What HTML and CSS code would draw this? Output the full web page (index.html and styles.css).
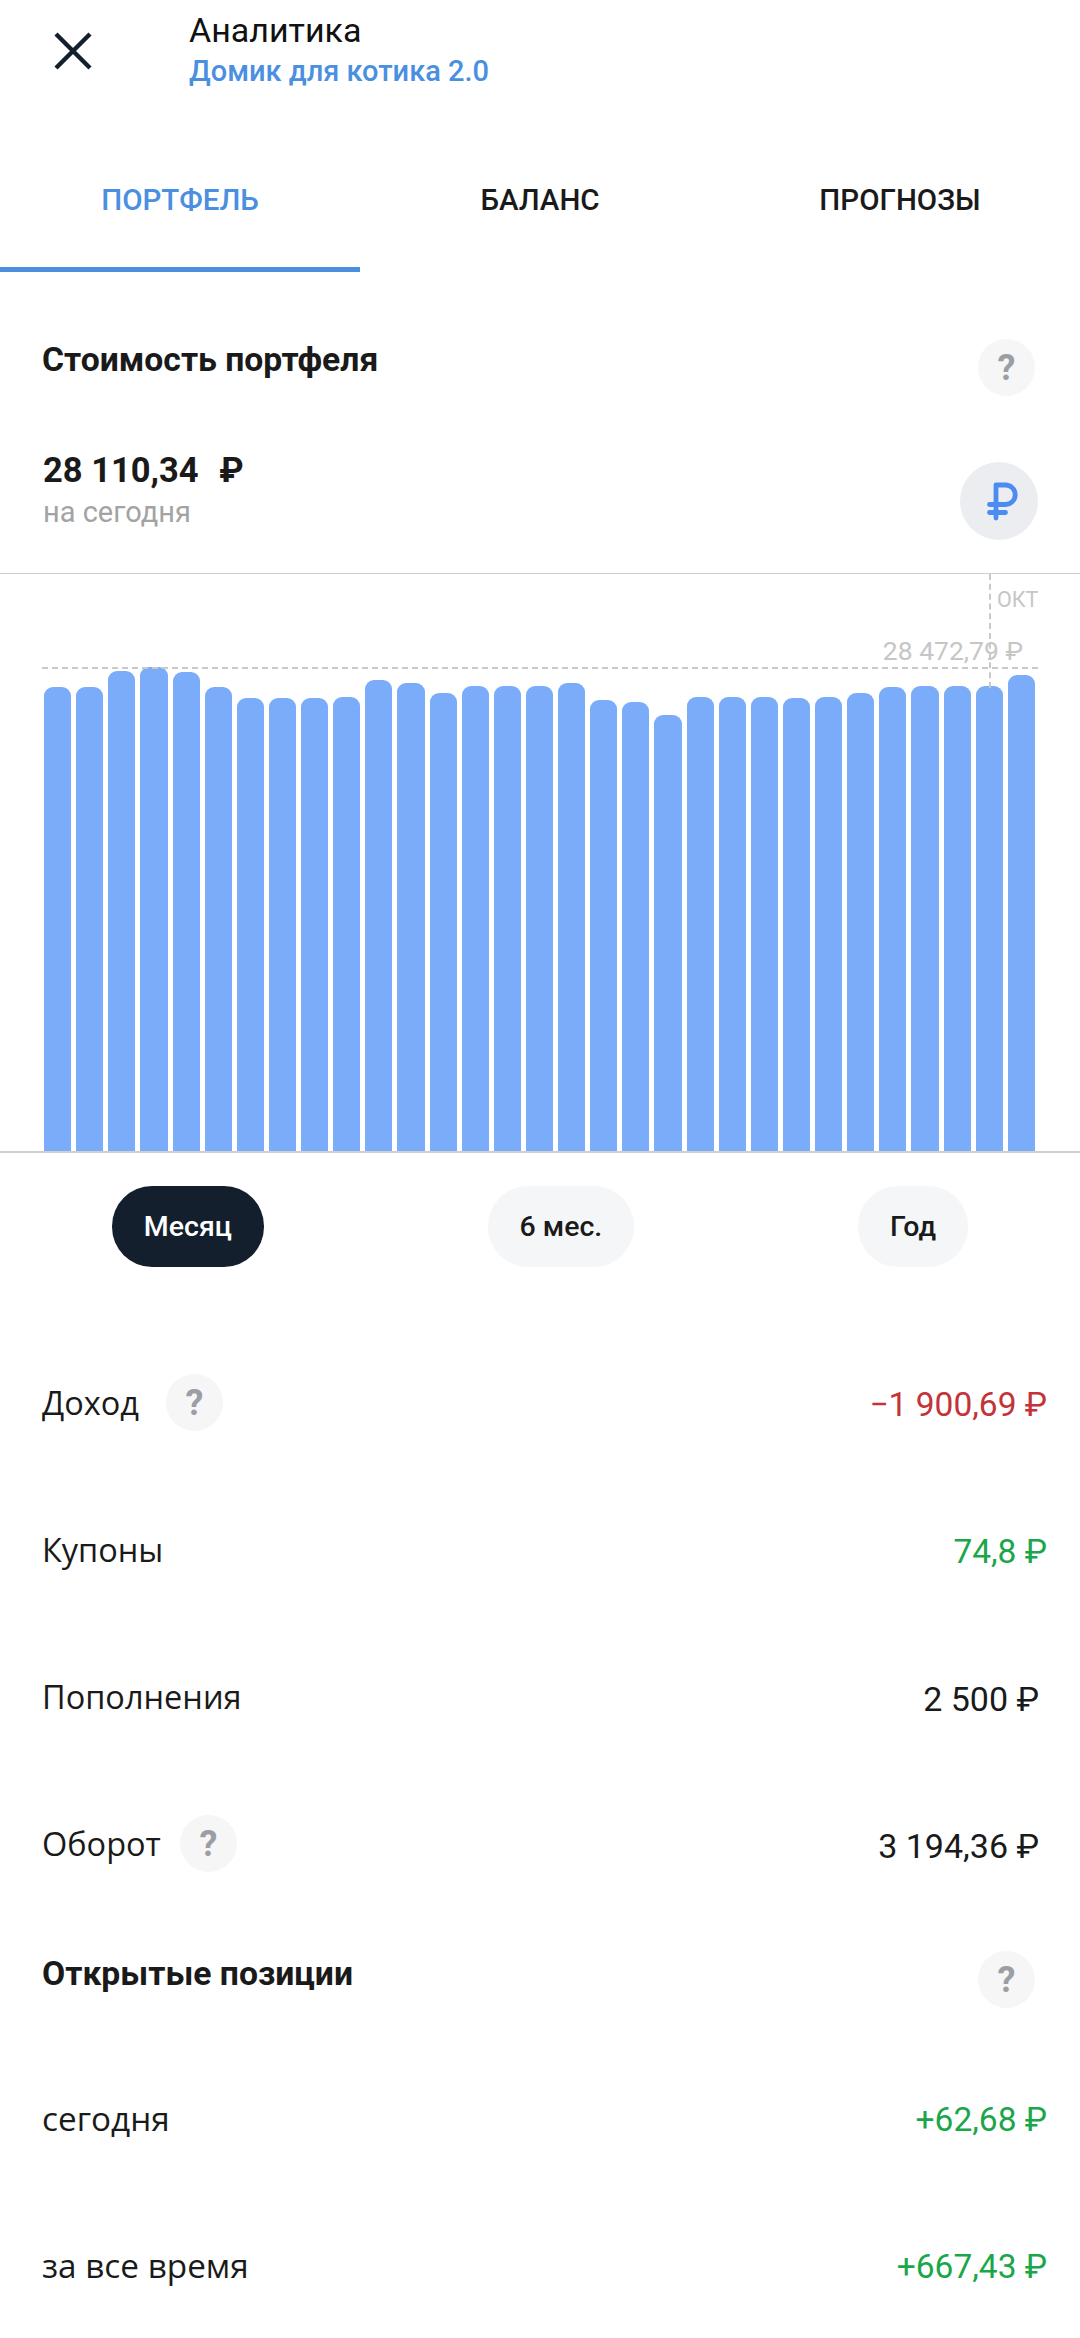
FILE: index.html
```html
<!DOCTYPE html>
<html lang="ru">
<head>
    <meta charset="UTF-8">
    <meta name="viewport" content="width=device-width, initial-scale=1.0">
    <title>Аналитика</title>
    <link rel="stylesheet" href="styles.css">
</head>
<body>

<header class="topbar">
    <svg class="close-icon" width="38" height="38" viewBox="0 0 38 38">
        <path d="M2 2 L36 36 M36 2 L2 36" fill="none" stroke="#141f2e" stroke-width="4.4"/>
    </svg>
    <div class="topbar-text">
        <div class="topbar-title">Аналитика</div>
        <div class="topbar-sub">Домик для котика 2.0</div>
    </div>
</header>

<nav class="tabs">
    <div class="tab active">ПОРТФЕЛЬ</div>
    <div class="tab">БАЛАНС</div>
    <div class="tab">ПРОГНОЗЫ</div>
</nav>

<section class="section-head head-portfolio">
    <h2>Стоимость портфеля</h2>
    <span class="help">?</span>
</section>

<section class="total">
    <div>
        <div class="total-value">28 110,34 <span class="total-sign">₽</span></div>
        <div class="total-note">на сегодня</div>
    </div>
    <span class="currency">
        <svg width="78" height="78" viewBox="0 0 78 78">
            <path d="M36 56 V23 H45.500 a9.750 9.750 0 0 1 0 19.500 H29.500 M29.500 50.500 H45.500" fill="none" stroke="#4a8cf0" stroke-width="4.800" stroke-linecap="round" stroke-linejoin="round"/>
        </svg>
    </span>
</section>

<section class="chart">
    <span class="month">ОКТ</span>
    <span class="peak">28 472,79 ₽</span>
    <span class="guide-h"></span>
    <span class="guide-v"></span>
    <div class="bars">
        <div class="bar" style="height:464px"></div>
        <div class="bar" style="height:464px"></div>
        <div class="bar" style="height:480px"></div>
        <div class="bar" style="height:484px"></div>
        <div class="bar" style="height:479px"></div>
        <div class="bar" style="height:464px"></div>
        <div class="bar" style="height:453px"></div>
        <div class="bar" style="height:453px"></div>
        <div class="bar" style="height:453px"></div>
        <div class="bar" style="height:454px"></div>
        <div class="bar" style="height:471px"></div>
        <div class="bar" style="height:468px"></div>
        <div class="bar" style="height:458px"></div>
        <div class="bar" style="height:465px"></div>
        <div class="bar" style="height:465px"></div>
        <div class="bar" style="height:465px"></div>
        <div class="bar" style="height:468px"></div>
        <div class="bar" style="height:451px"></div>
        <div class="bar" style="height:449px"></div>
        <div class="bar" style="height:436px"></div>
        <div class="bar" style="height:454px"></div>
        <div class="bar" style="height:454px"></div>
        <div class="bar" style="height:454px"></div>
        <div class="bar" style="height:453px"></div>
        <div class="bar" style="height:454px"></div>
        <div class="bar" style="height:458px"></div>
        <div class="bar" style="height:464px"></div>
        <div class="bar" style="height:465px"></div>
        <div class="bar" style="height:465px"></div>
        <div class="bar" style="height:465px"></div>
        <div class="bar" style="height:476px"></div>
    </div>
</section>

<div class="periods">
    <div class="pill selected">Месяц</div>
    <div class="pill">6 мес.</div>
    <div class="pill">Год</div>
</div>

<section class="stats">
    <div class="row">
        <div class="row-label">Доход <span class="help">?</span></div>
        <div class="row-value red">−1 900,69 ₽</div>
    </div>
    <div class="row">
        <div class="row-label">Купоны</div>
        <div class="row-value green">74,8 ₽</div>
    </div>
    <div class="row">
        <div class="row-label">Пополнения</div>
        <div class="row-value plain">2 500 ₽</div>
    </div>
    <div class="row">
        <div class="row-label">Оборот <span class="help near">?</span></div>
        <div class="row-value plain">3 194,36 ₽</div>
    </div>
</section>

<section class="section-head head-open">
    <h2>Открытые позиции</h2>
    <span class="help">?</span>
</section>

<section class="stats stats-open">
    <div class="row">
        <div class="row-label">сегодня</div>
        <div class="row-value green">+62,68 ₽</div>
    </div>
    <div class="row">
        <div class="row-label">за все время</div>
        <div class="row-value green">+667,43 ₽</div>
    </div>
</section>

</body>
</html>
```

FILE: styles.css
```css
* {
    box-sizing: border-box;
}
html, body {
    margin: 0;
    height: 2338px;
    overflow: hidden;
}
body {
    background: #fff;
    color: #1a1a1a;
    font-family: Roboto, "Noto Sans", sans-serif;
}

/* header */
.topbar {
    display: flex;
    height: 100px;
    padding-left: 54px;
}
.close-icon {
    margin-top: 32px;
}
.topbar-text {
    margin-left: 97px;
    padding-top: 9px;
}
.topbar-title {
    font-size: 34px;
    line-height: 42px;
    color: #111;
}
.topbar-sub {
    font-size: 29px;
    font-weight: 500;
    line-height: 41px;
    color: #4a8fe0;
}

/* tabs */
.tabs {
    display: flex;
    height: 172px;
}
.tab {
    flex: 1;
    text-align: center;
    padding-top: 82px;
    font-size: 29.500px;
    line-height: 36px;
    font-weight: 500;
    color: #1a1a1a;
}
.tab.active {
    color: #4a8fe0;
    border-bottom: 5px solid #4a8fe0;
}

/* section titles */
.section-head {
    display: flex;
    justify-content: space-between;
    padding: 0 45px 0 42px;
}
.section-head h2 {
    margin: 0;
    font-size: 33.700px;
    line-height: 40px;
    font-weight: 700;
}
.head-portfolio {
    padding-top: 67px;
    height: 152px;
}
.head-portfolio h2 {
    margin-top: 1px;
}
.head-open {
    height: 127px;
    padding-top: 34px;
}
.head-open h2 {
    margin-top: 3px;
}
.help {
    display: inline-flex;
    align-items: center;
    justify-content: center;
    width: 57px;
    height: 57px;
    border-radius: 50%;
    background: #f6f6f7;
    color: #9c9ea6;
    font-family: Roboto, sans-serif;
    font-size: 36px;
    font-weight: 700;
}

/* total */
.total {
    display: flex;
    justify-content: space-between;
    height: 149px;
    padding: 0 42px 0 43px;
}
.total-value {
    font-size: 34.500px;
    font-weight: 700;
    line-height: 46px;
    margin-top: 23px;
}
.total-sign {
    margin-left: 12px;
}
.total-note {
    font-size: 29px;
    line-height: 38px;
    color: #a3a3a3;
}
.currency {
    width: 78px;
    height: 78px;
    margin-top: 38px;
    border-radius: 50%;
    background: #ebedf0;
}
.currency svg {
    display: block;
}

/* chart */
.chart {
    position: relative;
    height: 580px;
    border-top: 1px solid #cfcfcf;
    border-bottom: 2px solid #cfcfcf;
    overflow: hidden;
}
.bars {
    display: flex;
    align-items: flex-end;
    gap: 5px;
    height: 100%;
    padding: 0 45px 0 44px;
}
.bar {
    flex: 1;
    background: #7aacf9;
    border-radius: 9px 9px 0 0;
}
.month {
    position: absolute;
    left: 997px;
    top: 13px;
    font-size: 21.500px;
    line-height: 26px;
    color: #c6c6c6;
}
.peak {
    position: absolute;
    right: 57px;
    top: 61px;
    font-size: 26.500px;
    line-height: 32px;
    color: #c6c6c6;
}
.guide-h {
    position: absolute;
    left: 42px;
    width: 996px;
    top: 93px;
    border-top: 2px dashed #c9c9c9;
}
.guide-v {
    position: absolute;
    left: 989px;
    top: 0;
    height: 114px;
    border-left: 2px dashed #c9c9c9;
}

/* period switch */
.periods {
    display: flex;
    justify-content: space-around;
    padding-top: 33px;
    height: 176px;
}
.pill {
    height: 81px;
    padding: 0 32px;
    display: flex;
    align-items: center;
    border-radius: 40px;
    background: #f5f6f8;
    font-size: 28.500px;
    font-weight: 500;
    color: #1a1a1a;
}
.pill.selected {
    background: #141f2e;
    color: #fff;
}

/* rows */
.row {
    display: flex;
    justify-content: space-between;
    align-items: center;
    height: 147px;
    padding: 0 33px 0 42px;
}
.row-label {
    display: flex;
    align-items: center;
    font-size: 32.500px;
    font-family: "Open Sans", sans-serif;
    color: #1a1a1a;
}
.stats-open .row-label {
    font-size: 33.300px;
}
.row-label .help {
    margin-left: 27px;
}
.row-label .help.near {
    margin-left: 19px;
}
.row-value {
    font-size: 33.500px;
    margin-top: 4px;
}
.row-value.plain {
    font-size: 34px;
    margin-right: 8px;
}
.red {
    color: #c4323a;
}
.green {
    color: #1ba64a;
}
```
